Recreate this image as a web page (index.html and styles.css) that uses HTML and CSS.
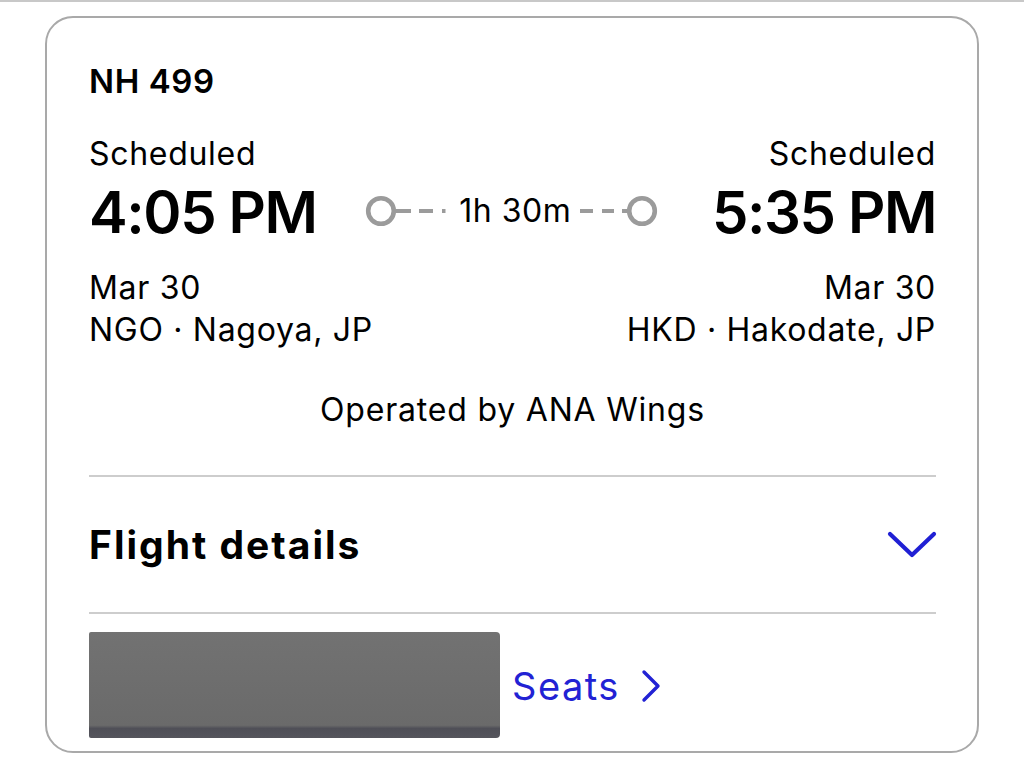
FILE: index.html
```html
<!DOCTYPE html>
<html lang="en">
<head>
<meta charset="utf-8">
<title>NH 499</title>
<link rel="stylesheet" href="styles.css">
</head>
<body>
<div class="topline"></div>
<main class="card">
  <div class="flight-no">NH 499</div>
  <div class="labels">
    <span>Scheduled</span>
    <span>Scheduled</span>
  </div>
  <div class="times">
    <span class="time">4:05 PM</span>
    <div class="duration">
      <svg class="dur-left" width="88" height="32" viewBox="0 0 88 32" aria-hidden="true">
        <circle cx="16" cy="16" r="12.8" fill="none" stroke="#9b9b9b" stroke-width="4.6"/>
        <line x1="30" y1="16" x2="46" y2="16" stroke="#9b9b9b" stroke-width="4"/>
        <line x1="54" y1="16" x2="68" y2="16" stroke="#9b9b9b" stroke-width="4"/>
        <line x1="77" y1="16" x2="80.5" y2="16" stroke="#9b9b9b" stroke-width="4"/>
      </svg>
      <span class="dur-text">1h 30m</span>
      <svg class="dur-right" width="84" height="32" viewBox="0 0 84 32" aria-hidden="true">
        <line x1="5" y1="16" x2="18" y2="16" stroke="#9b9b9b" stroke-width="4"/>
        <line x1="27" y1="16" x2="39" y2="16" stroke="#9b9b9b" stroke-width="4"/>
        <line x1="47" y1="16" x2="54" y2="16" stroke="#9b9b9b" stroke-width="4"/>
        <circle cx="67" cy="16" r="12.8" fill="none" stroke="#9b9b9b" stroke-width="4.6"/>
      </svg>
    </div>
    <span class="time">5:35 PM</span>
  </div>
  <div class="places">
    <div class="place">
      <div>Mar 30</div>
      <div>NGO · Nagoya, JP</div>
    </div>
    <div class="place place-right">
      <div>Mar 30</div>
      <div>HKD · Hakodate, JP</div>
    </div>
  </div>
  <div class="operator">Operated by ANA Wings</div>
  <div class="divider"></div>
  <div class="details-row">
    <span class="details-title">Flight details</span>
    <svg class="chev-down" width="50" height="28" viewBox="0 0 50 28" aria-hidden="true">
      <polyline points="3,3 25,24 47,3" fill="none" stroke="#2020d4" stroke-width="4.2" stroke-linecap="round" stroke-linejoin="round"/>
    </svg>
  </div>
  <div class="divider"></div>
  <div class="seats-row">
    <div class="redacted"></div>
    <a class="seats" href="#">Seats
      <svg class="chev-right" width="20" height="34" viewBox="0 0 20 34" aria-hidden="true">
        <polyline points="3,3 17,17 3,31" fill="none" stroke="#2222d4" stroke-width="3.4" stroke-linecap="round" stroke-linejoin="round"/>
      </svg>
    </a>
  </div>
</main>
</body>
</html>
```
FILE: styles.css
```css
* { box-sizing: border-box; }

html, body {
  margin: 0;
  padding: 0;
  background: #ffffff;
}

body {
  font-family: "Inter", "Noto Sans", sans-serif;
  color: #000;
  width: 1024px;
  height: 772px;
  overflow: hidden;
}

.topline {
  height: 2px;
  background: #c8c8c8;
}

.card {
  display: block;
  margin: 14px 0 0 45px;
  width: 934px;
  border: 2px solid #a9a9a9;
  border-radius: 28px;
  padding: 43px 41px 13px 42px;
}

.flight-no {
  font-size: 33px;
  font-weight: 600;
  line-height: 40px;
  letter-spacing: 0.6px;
}

.labels {
  display: flex;
  justify-content: space-between;
  font-size: 32px;
  line-height: 38px;
  letter-spacing: 0.7px;
  margin-top: 34px;
}

.times {
  display: flex;
  justify-content: space-between;
  align-items: center;
  margin-top: 7px;
  height: 64px;
}

.time {
  font-size: 58px;
  font-weight: 600;
  line-height: 64px;
  letter-spacing: -1.4px;
}

.duration {
  display: flex;
  align-items: center;
  margin-top: -2px;
  margin-right: 4px;
}

.dur-left { display: block; margin-right: 6px; }
.dur-right { display: block; margin-left: 4px; }

.dur-text {
  font-size: 32px;
  line-height: 38px;
  letter-spacing: 0.5px;
}

.places {
  display: flex;
  justify-content: space-between;
  margin-top: 23px;
  font-size: 32px;
  line-height: 42px;
  letter-spacing: 0.7px;
}

.place-right { text-align: right; }

.operator {
  text-align: center;
  font-size: 32px;
  line-height: 38px;
  letter-spacing: 0.8px;
  margin-top: 40px;
}

.divider {
  height: 2px;
  background: #cdcdcd;
}

.operator + .divider { margin-top: 46px; }

.details-row {
  display: flex;
  justify-content: space-between;
  align-items: center;
  padding: 45px 0 44px;
}

.details-title {
  font-size: 39px;
  font-weight: 700;
  line-height: 46px;
  letter-spacing: 2px;
}

.chev-down { display: block; margin-right: -1px; }

.seats-row {
  display: flex;
  align-items: center;
  margin-top: 18px;
}

.redacted {
  width: 411px;
  height: 106px;
  border-radius: 2px 4px 4px 2px;
  background: linear-gradient(to bottom, #727272 0%, #6a6a6a 88%, #4f4f57 91%, #55555c 100%);
}

.seats {
  display: flex;
  align-items: center;
  gap: 21px;
  margin-left: 12px;
  margin-top: 2px;
  font-size: 38px;
  line-height: 44px;
  letter-spacing: 1.5px;
  color: #2222d4;
  text-decoration: none;
}

.chev-right { display: block; }
```
